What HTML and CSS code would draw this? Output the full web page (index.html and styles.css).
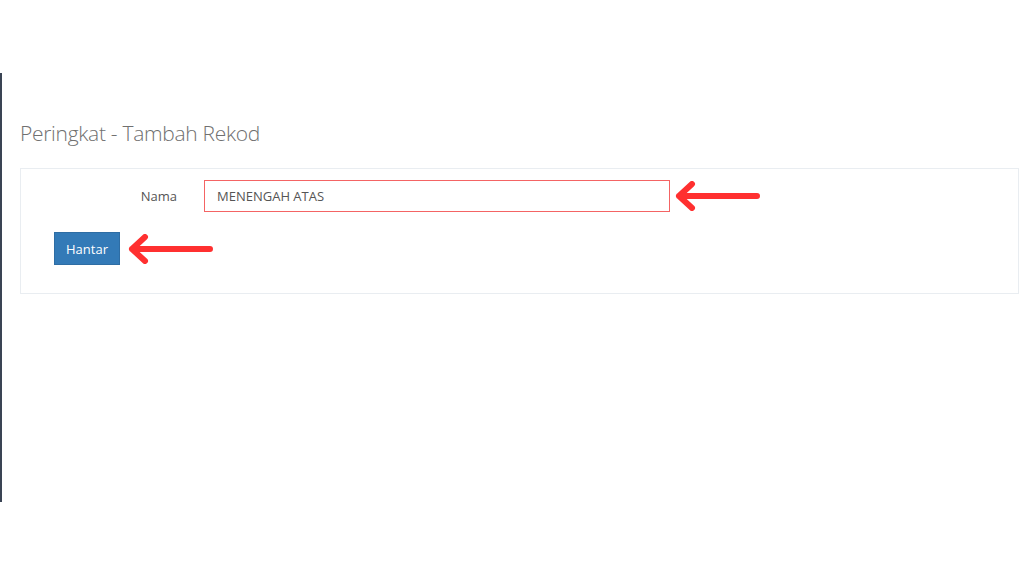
FILE: index.html
```html
<!DOCTYPE html>
<html lang="ms">
<head>
  <meta charset="UTF-8">
  <title>Peringkat - Tambah Rekod</title>
  <link rel="stylesheet" href="styles.css">
</head>
<body>
  <div class="page">
    <div class="content">
      <h1 class="page-title">Peringkat - Tambah Rekod</h1>

      <form class="panel">
        <div class="form-row">
          <label class="form-label" for="nama">Nama</label>
          <input id="nama" class="form-input" type="text" value="MENENGAH ATAS">
          <svg class="arrow arrow-input" width="86" height="30" viewBox="0 0 86 30">
            <path d="M4 15 H82 M17 3 L4 15 L17 27" fill="none" stroke="#ff3030" stroke-width="6" stroke-linecap="round" stroke-linejoin="round"/>
          </svg>
        </div>
        <div class="form-actions">
          <button type="button" class="btn-submit">Hantar</button>
          <svg class="arrow arrow-button" width="86" height="30" viewBox="0 0 86 30">
            <path d="M4 15 H82 M17 3 L4 15 L17 27" fill="none" stroke="#ff3030" stroke-width="6" stroke-linecap="round" stroke-linejoin="round"/>
          </svg>
        </div>
      </form>
    </div>
  </div>
</body>
</html>
```

FILE: styles.css
```css
/* Base */
* {
  margin: 0;
  padding: 0;
  box-sizing: border-box;
}

body {
  font-family: 'Open Sans', 'Liberation Sans', sans-serif;
  font-size: 13px;
  color: #555;
  background-color: #fff;
}

/* Page frame with the sidebar edge */
.page {
  margin-top: 73px;
  height: 429px;
  border-left: 2px solid #3a4454;
}

.content {
  padding: 0 5px 0 18px;
}

.page-title {
  font-size: 21px;
  font-weight: 300;
  color: #707070;
  line-height: 30px;
  padding-top: 45px;
  margin-bottom: 20px;
  letter-spacing: -0.3px;
}

/* Panel */
.panel {
  border: 1px solid #e9edf1;
  padding: 11px 0 28px 0;
}

.form-row {
  display: flex;
  align-items: center;
}

.form-label {
  width: 156px;
  text-align: right;
  margin-right: 27px;
  color: #555;
}

.form-input {
  width: 466px;
  height: 32px;
  padding: 0 12px;
  border: 1.5px solid #f46464;
  font-family: inherit;
  font-size: 13px;
  color: #555;
  outline: none;
}

.arrow {
  display: block;
}

.arrow-input {
  margin-left: 5px;
}

/* Actions */
.form-actions {
  display: flex;
  align-items: center;
  margin-top: 20px;
  padding-left: 33px;
}

.btn-submit {
  width: 66px;
  height: 33px;
  background-color: #337ab7;
  border: 1px solid #2e6da4;
  color: #fff;
  font-family: inherit;
  font-size: 13px;
  cursor: pointer;
}

.arrow-button {
  margin-left: 8px;
}
```
